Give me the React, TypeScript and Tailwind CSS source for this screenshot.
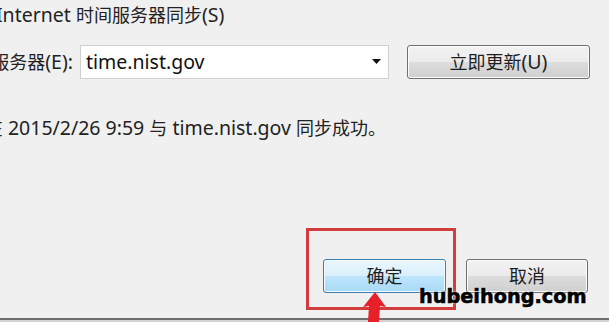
export default function App() {
  const win7Btn =
    "h-[34px] rounded-[3px] border border-[#707070] bg-[linear-gradient(#f2f2f2_0%,#ebebeb_50%,#dddddd_51%,#cfcfcf_100%)] shadow-[inset_0_0_0_1px_#fcfcfc] text-[#1e1e1e] flex items-center justify-center";
  const cjk = "text-[18px]";
  return (
    <div className="relative w-[609px] h-[322px] overflow-hidden bg-[#f0f0f0] text-[#222] text-[19.5px] font-['Noto_Sans','Noto_Sans_CJK_SC',sans-serif]">
      <div className="flex flex-col h-full">
        <div className="pt-[2px] h-[28px] overflow-hidden leading-[26px] whitespace-nowrap">
          <span className="-ml-[4px] inline-block">
            Internet <span className={cjk}>时间服务器同步</span>(S)
          </span>
        </div>
        <div className="mt-[16px] flex items-center h-[35px] whitespace-nowrap">
          <div className="w-[73px] overflow-hidden flex justify-end">
            <span>
              <span className={cjk}>服务器</span>(E):
            </span>
          </div>
          <div className="ml-[7px] w-[309px] h-[34px] bg-white border border-[#d0d0d0] flex items-center pl-[5px] pr-[7px]">
            <span className="text-[#111]">time.nist.gov</span>
            <svg className="ml-auto" width="9" height="5" viewBox="0 0 9 5">
              <polygon points="0,0 9,0 4.5,5" fill="#111" />
            </svg>
          </div>
          <div className={"ml-[18px] w-[183px] " + win7Btn}>
            <span>
              <span className={cjk}>立即更新</span>(U)
            </span>
          </div>
        </div>
        <div className="mt-[36px] w-[386px] overflow-hidden flex justify-end leading-[26px] whitespace-nowrap">
          <span>
            <span className={cjk}>钟在</span> 2015/2/26 9:59 <span className={cjk}>与</span> time.nist.gov{" "}
            <span className={cjk}>同步成功。</span>
          </span>
        </div>
        <div className="mt-auto mb-[29px] flex justify-end gap-[20px] pr-[21px]">
          <div className="w-[123px] h-[34px] rounded-[3px] border border-[#3c7fb1] bg-[linear-gradient(#eaf6fd_0%,#d9f0fc_50%,#bee6fd_51%,#a7d9f5_100%)] shadow-[inset_0_0_0_1px_#f4fbff] text-[18px] text-[#1e1e1e] flex items-center justify-center">
            确定
          </div>
          <div className={"w-[122px] text-[18px] " + win7Btn}>取消</div>
        </div>
      </div>

      <div className="absolute left-0 right-0 top-[318px] h-[2px] bg-[#6e6e6e]" />
      <div className="absolute left-0 right-0 top-[320px] h-[2px] bg-[#d4d4d4]" />

      <div className="absolute left-[306px] top-[228px] w-[150px] h-[82px] border-[3px] border-[#d23c3c]" />

      <svg className="absolute left-0 top-0" width="609" height="322" viewBox="0 0 609 322">
        <polygon points="375,292 386,307 380,306 379,322 368,322 369,306 363,307" fill="#e8202a" />
      </svg>

      <div className="absolute left-[419px] top-[287px] text-[19.3px] leading-none font-bold text-black font-['DejaVu_Sans',sans-serif] [-webkit-text-stroke:0.6px_#000] [text-shadow:0_0_2px_#fff,0_0_2px_#fff]">
        hubeihong.com
      </div>
    </div>
  );
}
